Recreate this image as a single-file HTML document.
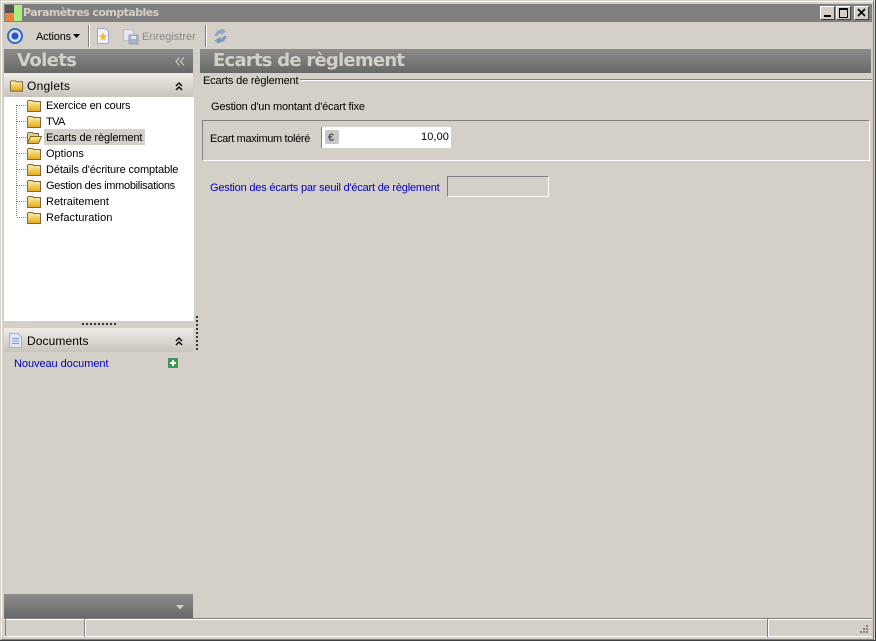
<!DOCTYPE html>
<html><head><meta charset="utf-8"><style>
html,body{margin:0;padding:0}
body{width:876px;height:641px;position:relative;overflow:hidden;background:#d4d0c8;font:11px "Liberation Sans",sans-serif;color:#000}
div,span.a,svg{position:absolute}
.t{white-space:nowrap;line-height:14px}
.hd{background:linear-gradient(#8c8c8c,#686868)}
.sec{background:linear-gradient(#efece6,#c8c4bb)}
.b{font-family:"DejaVu Sans",sans-serif;font-weight:bold;color:#d4d0c8;white-space:nowrap}
.btn{background:#d4d0c8;border:1px solid;border-color:#fff #404040 #404040 #fff;width:13px;height:12px;top:6px}
.blue{color:#0000c0}
</style></head><body>
<svg width="0" height="0" style="position:absolute"><defs>
<linearGradient id="fg" x1="0" y1="0" x2="0" y2="1"><stop offset="0" stop-color="#fff0b0"/><stop offset="1" stop-color="#e0a818"/></linearGradient>
<symbol id="f" viewBox="0 0 16 13"><path d="M1.5 2.5 L2.5 1.5 H6.5 L7.5 2.5 H14.5 V12.5 H1.5 Z" fill="url(#fg)" stroke="#7c6a38"/></symbol>
<symbol id="o" viewBox="0 0 16 13"><path d="M1.5 12.5 V2.5 L2.5 1.5 H6.5 L7.5 2.5 H12.5 V5.5" fill="#e8d080" stroke="#7c6a38"/><path d="M1.5 12.5 L4.5 5.5 H15.5 L12.5 12.5 Z" fill="url(#fg)" stroke="#7c6a38"/></symbol>
<symbol id="c" viewBox="0 0 8 9"><path d="M1 4 L4 1 L7 4 M1 8 L4 5 L7 8" fill="none" stroke="#000" stroke-width="1.4"/></symbol>
</defs></svg>

<!-- window frame -->
<div style="left:0;top:0;width:876px;height:1px;background:#d4d0c8"></div>
<div style="left:1px;top:1px;width:873px;height:1px;background:#fff"></div>
<div style="left:1px;top:1px;width:1px;height:637px;background:#fff"></div>
<div style="left:873px;top:1px;width:1px;height:638px;background:#808080"></div>
<div style="left:875px;top:0;width:1px;height:641px;background:#404040"></div>
<div style="left:0;top:640px;width:876px;height:1px;background:#404040"></div>
<div style="left:1px;top:639px;width:873px;height:1px;background:#808080"></div>

<!-- title bar -->
<div style="left:4px;top:4px;width:868px;height:18px;background:#808080"></div>
<div style="left:5px;top:5px;width:9px;height:8px;background:#555"></div>
<div style="left:5px;top:13px;width:9px;height:8px;background:#f08040"></div>
<div style="left:14px;top:5px;width:8px;height:16px;background:#a8ee80"></div>
<div class="b" style="left:23px;top:6px;font-size:11px;line-height:14px;letter-spacing:-.55px">Paramètres comptables</div>
<div class="btn" style="left:820px"><div style="left:3px;top:8px;width:7px;height:2px;background:#000"></div></div>
<div class="btn" style="left:836px"><div style="left:2px;top:1px;width:7px;height:7px;border:1px solid #000;border-top-width:2px"></div></div>
<div class="btn" style="left:854px"><svg style="left:2px;top:1px" width="9" height="9"><path d="M1 1 L8 8 M8 1 L1 8" stroke="#000" stroke-width="1.6"/></svg></div>

<!-- toolbar -->
<svg style="left:5px;top:26px" width="20" height="20"><circle cx="10" cy="10" r="7" fill="#c8d4ee" stroke="#3a68c8" stroke-width="2"/><circle cx="10" cy="10" r="3.5" fill="#2a58c0"/><circle cx="10" cy="10" r="5.2" fill="none" stroke="#e8eefa"/></svg>
<div class="t" style="left:36px;top:30px;letter-spacing:-.15px">Actions</div>
<svg style="left:73px;top:34px" width="8" height="5"><path d="M0 0 H7 L3.5 4 Z" fill="#000"/></svg>
<div style="left:88px;top:25px;width:1px;height:22px;background:#808080"></div><div style="left:89px;top:25px;width:1px;height:22px;background:#fff"></div>
<svg style="left:96px;top:28px" width="14" height="16"><path d="M1.5 .5 H9.5 L12.5 3.5 V15.5 H1.5 Z" fill="#f4f4ff" stroke="#a0a8c8"/><path d="M7 4 L8.2 7 L11 7.5 L9 9.5 L9.5 12.5 L7 11 L4.5 12.5 L5 9.5 L3 7.5 L5.8 7 Z" fill="#f0c030"/></svg>
<svg style="left:122px;top:28px" width="17" height="17"><path d="M1.5 1.5 H9.5 L11.5 3.5 V12.5 H1.5 Z" fill="#e6e8f0" stroke="#b8bcc8"/><rect x="7" y="7" width="9" height="9" fill="#a8b0c8" stroke="#9aa0b8"/><rect x="9" y="8" width="5" height="3" fill="#e8e8f0"/></svg>
<div class="t" style="left:142px;top:30px;color:#8a8a8a">Enregistrer</div>
<div style="left:205px;top:25px;width:1px;height:22px;background:#808080"></div><div style="left:206px;top:25px;width:1px;height:22px;background:#fff"></div>
<svg style="left:212px;top:27px" width="17" height="18"><path d="M2 9 L5 4 L10 2 H14 L11 4 H15 L9 8 L8 6 L5 9 Z" fill="#8ea8c8"/><path d="M15 9 L12 14 L7 16 H3 L6 14 H2 L8 10 L9 12 L12 9 Z" fill="#7a98bc"/></svg>

<!-- left panel -->
<div class="hd" style="left:4px;top:49px;width:189px;height:24px"></div>
<div class="b" style="left:17px;top:49px;font-size:18px;line-height:24px;letter-spacing:-.6px">Volets</div>
<svg style="left:175px;top:57px" width="10" height="9"><path d="M4.5 .5 L1 4.5 L4.5 8.5 M9 .5 L5.5 4.5 L9 8.5" fill="none" stroke="#d4d0c8" stroke-width="1.1"/></svg>

<div class="sec" style="left:4px;top:73px;width:189px;height:24px"></div>
<svg style="left:9px;top:79px" width="15" height="13"><use href="#f"/></svg>
<div class="t" style="left:27px;top:79px;font-size:12px;letter-spacing:.25px">Onglets</div>
<svg style="left:175px;top:82px" width="8" height="9"><use href="#c"/></svg>

<div style="left:4px;top:97px;width:190px;height:224px;background:#fff"></div>
<svg style="left:15px;top:97px" width="14" height="125"><path d="M1.5 8 V120 M2 8.5H12 M2 24.5H12 M2 40.5H12 M2 56.5H12 M2 72.5H12 M2 88.5H12 M2 104.5H12 M2 120.5H12" stroke="#808080" stroke-dasharray="1 1" fill="none"/></svg>
<div style="left:44px;top:129px;width:101px;height:16px;background:#d4d0c8"></div>
<svg style="left:26px;top:99px" width="16" height="13"><use href="#f"/></svg>
<svg style="left:26px;top:115px" width="16" height="13"><use href="#f"/></svg>
<svg style="left:26px;top:131px" width="16" height="13"><use href="#o"/></svg>
<svg style="left:26px;top:147px" width="16" height="13"><use href="#f"/></svg>
<svg style="left:26px;top:163px" width="16" height="13"><use href="#f"/></svg>
<svg style="left:26px;top:179px" width="16" height="13"><use href="#f"/></svg>
<svg style="left:26px;top:195px" width="16" height="13"><use href="#f"/></svg>
<svg style="left:26px;top:211px" width="16" height="13"><use href="#f"/></svg>
<div class="t" style="left:46px;top:99px;letter-spacing:-.18px">Exercice en cours</div>
<div class="t" style="left:46px;top:115px;letter-spacing:-.6px">TVA</div>
<div class="t" style="left:46px;top:131px;letter-spacing:-.11px">Ecarts de règlement</div>
<div class="t" style="left:46px;top:147px">Options</div>
<div class="t" style="left:46px;top:163px;letter-spacing:-.11px">Détails d'écriture comptable</div>
<div class="t" style="left:46px;top:179px;letter-spacing:-.3px">Gestion des immobilisations</div>
<div class="t" style="left:46px;top:195px">Retraitement</div>
<div class="t" style="left:46px;top:211px;letter-spacing:.08px">Refacturation</div>

<div style="left:82px;top:323px;width:34px;height:2px;background:repeating-linear-gradient(90deg,#333 0 2px,transparent 2px 4px)"></div>
<div style="left:196px;top:316px;width:2px;height:34px;background:repeating-linear-gradient(#333 0 2px,transparent 2px 4px)"></div>

<div class="sec" style="left:4px;top:328px;width:189px;height:24px"></div>
<svg style="left:9px;top:333px" width="13" height="15"><path d="M.5 .5 H9 L12.5 4 V14.5 H.5 Z" fill="#dfe6fa" stroke="#9fb0dc"/><path d="M3 5.5H10M3 8H10M3 10.5H10" stroke="#8098d8"/></svg>
<div class="t" style="left:27px;top:334px;font-size:12px;letter-spacing:.1px">Documents</div>
<svg style="left:175px;top:337px" width="8" height="9"><use href="#c"/></svg>
<div class="t blue" style="left:14px;top:357px;letter-spacing:-.06px">Nouveau document</div>
<svg style="left:168px;top:358px" width="10" height="10"><rect width="10" height="10" fill="#3a9a50"/><path d="M5 2 V8 M2 5 H8" stroke="#fff" stroke-width="2"/></svg>

<div class="hd" style="left:4px;top:594px;width:189px;height:24px"></div>
<svg style="left:176px;top:605px" width="8" height="5"><path d="M0 0 H8 L4 4.5 Z" fill="#d4d0c8"/></svg>

<!-- main -->
<div class="hd" style="left:200px;top:49px;width:671px;height:24px"></div>
<div class="b" style="left:213px;top:49px;font-size:18px;line-height:24px;letter-spacing:-.76px">Ecarts de règlement</div>

<div class="t" style="left:203px;top:74px;letter-spacing:-.16px">Ecarts de règlement</div>
<div style="left:300px;top:79px;width:572px;height:1px;background:#808080"></div>
<div style="left:300px;top:80px;width:572px;height:1px;background:#fff"></div>
<div class="t" style="left:211px;top:100px;letter-spacing:-.19px">Gestion d'un montant d'écart fixe</div>

<div style="left:202px;top:120px;width:666px;height:39px;border:1px solid;border-color:#808080 #fff #fff #808080"></div>
<div class="t" style="left:210px;top:132px;letter-spacing:-.35px">Ecart maximum toléré</div>
<div style="left:321px;top:127px;width:130px;height:21px;background:#fff"></div>
<div style="left:321px;top:127px;width:1px;height:21px;background:#808080"></div>
<div style="left:325px;top:130px;width:14px;height:14px;background:#c8c8c8;border-radius:2px"></div>
<div class="t" style="left:328px;top:131px;color:#555;font-weight:bold">€</div>
<div class="t" style="left:421px;top:130px;letter-spacing:.1px">10,00</div>

<div class="t blue" style="left:210px;top:181px;letter-spacing:-.2px">Gestion des écarts par seuil d'écart de règlement</div>
<div style="left:447px;top:176px;width:100px;height:19px;border:1px solid;border-color:#808080 #fff #fff #808080"></div>

<!-- status bar -->
<div style="left:4px;top:618px;width:868px;height:1px;background:#808080"></div>
<div style="left:4px;top:619px;width:868px;height:1px;background:#fff"></div>
<div style="left:4px;top:636px;width:868px;height:1px;background:#fff"></div>
<div style="left:5px;top:619px;width:1px;height:17px;background:#808080"></div>
<div style="left:84px;top:619px;width:1px;height:18px;background:#808080"></div>
<div style="left:85px;top:619px;width:1px;height:18px;background:#fff"></div>
<div style="left:767px;top:619px;width:1px;height:18px;background:#808080"></div>
<div style="left:768px;top:619px;width:1px;height:18px;background:#fff"></div>
<svg style="left:856px;top:624px" width="14" height="12"><path d="M10 1h2v2h-2zM7 4h2v2H7zM10 4h2v2h-2zM4 7h2v2H4zM7 7h2v2H7zM10 7h2v2h-2z" fill="#808080"/></svg>
</body></html>
